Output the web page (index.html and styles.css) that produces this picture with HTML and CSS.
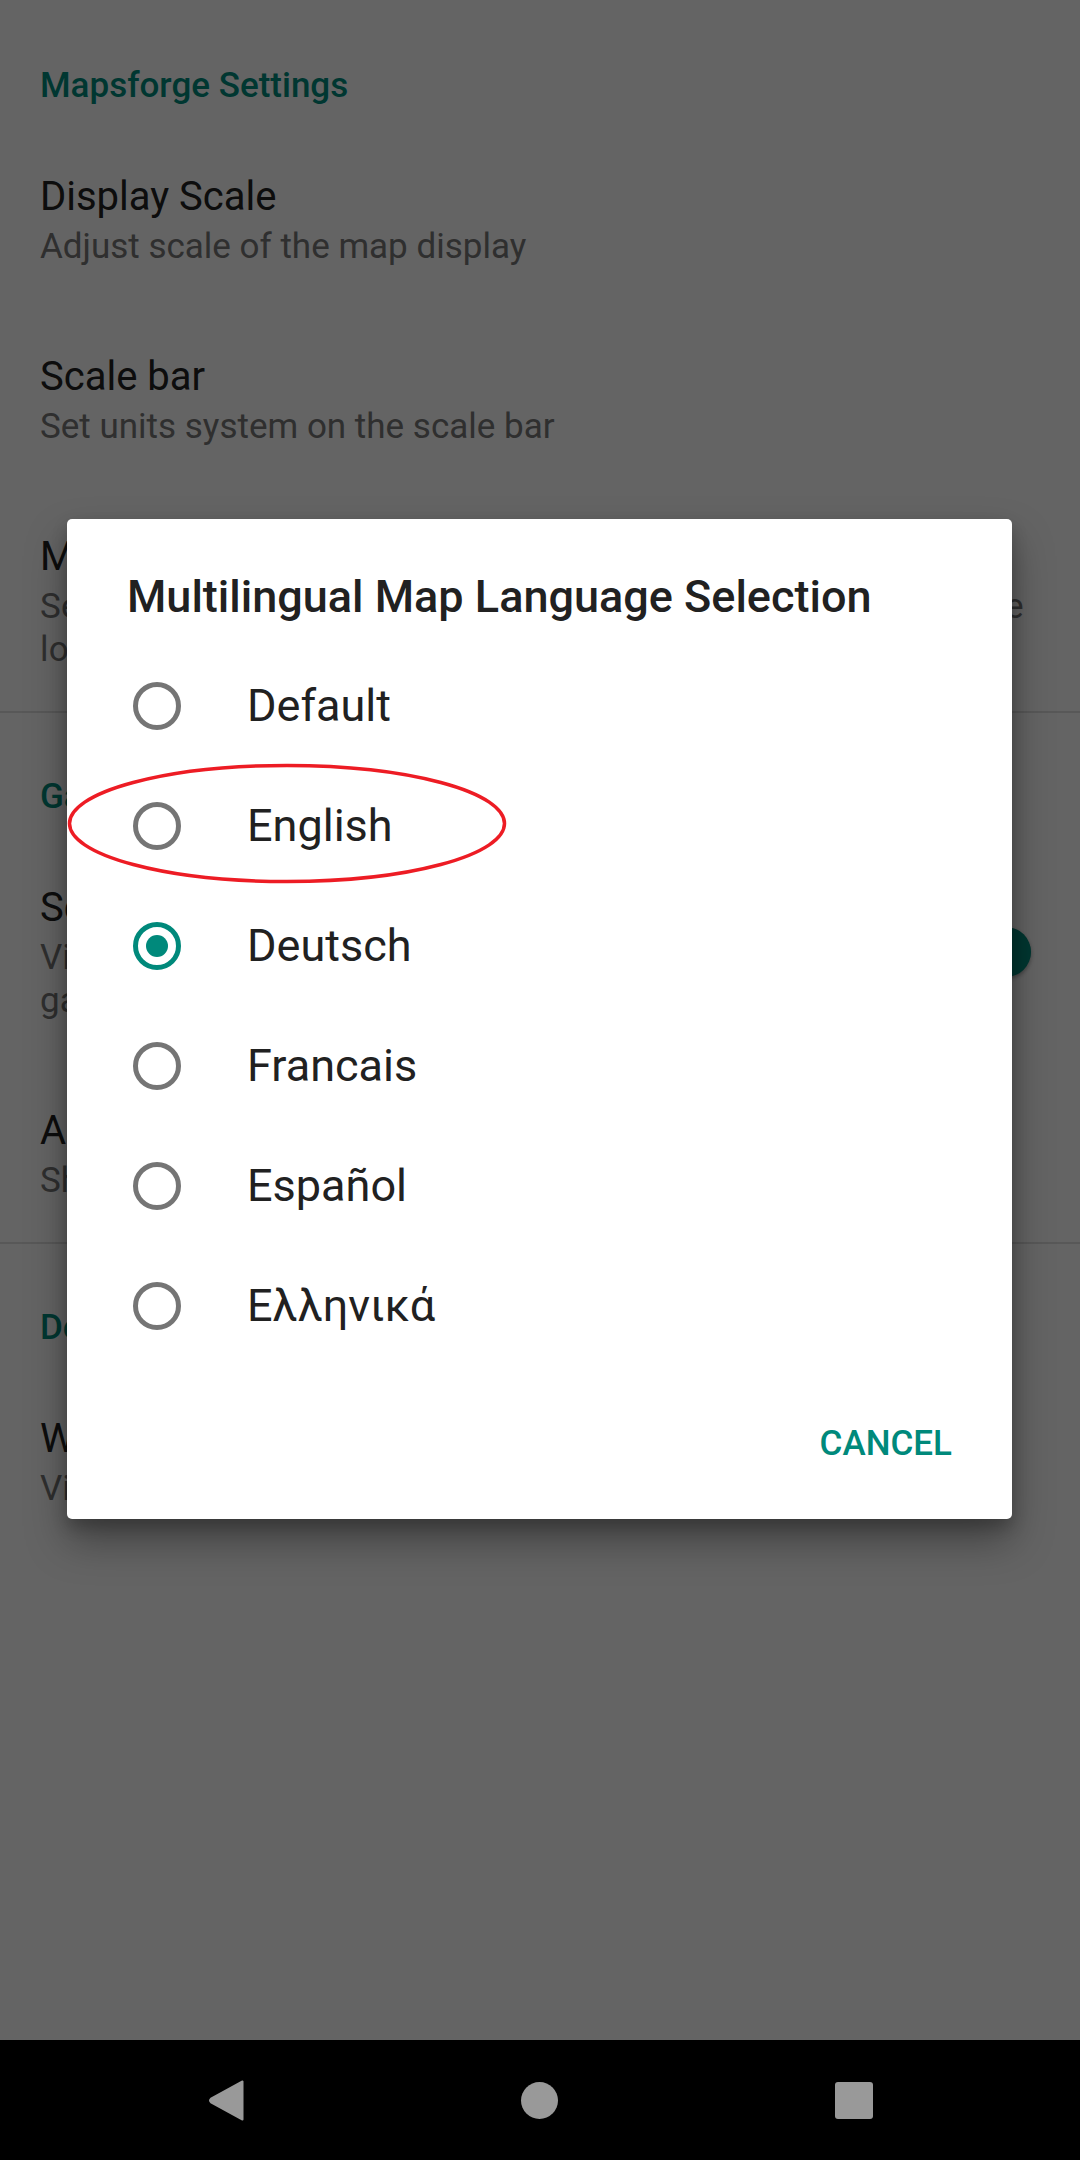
FILE: index.html
```html
<!DOCTYPE html>
<html lang="en">
<head>
<meta charset="utf-8">
<title>Mapsforge Settings</title>
<link rel="stylesheet" href="styles.css">
</head>
<body>
<div class="screen">
  <main class="prefs">
    <section class="group">
      <h2 class="cat">Mapsforge Settings</h2>
      <div class="item">
        <div class="title">Display Scale</div>
        <div class="summary">Adjust scale of the map display</div>
      </div>
      <div class="item">
        <div class="title">Scale bar</div>
        <div class="summary">Set units system on the scale bar</div>
      </div>
      <div class="item">
        <div class="title">Multilingual Map</div>
        <div class="summary wide">Select the map's language for multilingual maps, otherwise the<br>local language is used</div>
      </div>
    </section>
    <section class="group divided">
      <h2 class="cat">Gallery</h2>
      <div class="item switch-item">
        <div class="texts">
          <div class="title">Scene view</div>
          <div class="summary">View the sample maps one after another in the<br>gallery</div>
        </div>
        <div class="switch"><span class="track"></span><span class="thumb"></span></div>
      </div>
      <div class="item">
        <div class="title">Animation</div>
        <div class="summary">Show animated map movements</div>
      </div>
    </section>
    <section class="group divided">
      <h2 class="cat">Debug</h2>
      <div class="item">
        <div class="title">Wireframe</div>
        <div class="summary">View tile boundaries</div>
      </div>
    </section>
    <div class="scrim"></div>
  </main>
  <nav class="navbar">
    <svg class="nav-back" width="36" height="41" viewBox="0 0 36 41"><path d="M34.5 1.5 L34.5 39.5 L3 22.3 Q1 20.5 3 18.7 Z" fill="#999" stroke="#999" stroke-width="2" stroke-linejoin="round"/></svg>
    <span class="nav-home"></span>
    <span class="nav-recent"></span>
  </nav>
</div>

<div class="dialog">
  <h1 class="dlg-title">Multilingual Map Language Selection</h1>
  <ul class="choices">
    <li class="choice"><span class="radio"></span><span class="label">Default</span></li>
    <li class="choice"><span class="radio"></span><span class="label">English</span></li>
    <li class="choice"><span class="radio checked"><span class="dot"></span></span><span class="label">Deutsch</span></li>
    <li class="choice"><span class="radio"></span><span class="label">Francais</span></li>
    <li class="choice"><span class="radio"></span><span class="label">Español</span></li>
    <li class="choice"><span class="radio"></span><span class="label">Ελληνικά</span></li>
  </ul>
  <div class="actions"><span class="btn">CANCEL</span></div>
</div>

<svg class="annotation" width="440" height="121" viewBox="0 0 440 121"><ellipse cx="220" cy="60.5" rx="217.5" ry="58" fill="none" stroke="#ED1C24" stroke-width="3.5"/></svg>
</body>
</html>
```

FILE: styles.css
```css
* { box-sizing: border-box; }
html, body { margin: 0; padding: 0; }
body {
  width: 1080px;
  height: 2160px;
  overflow: hidden;
  position: relative;
  font-family: Roboto, "Noto Sans", "Liberation Sans", sans-serif;
  background: #000;
}
.screen {
  display: flex;
  flex-direction: column;
  height: 2160px;
}
.prefs {
  flex: 1;
  position: relative;
  background: #fafafa;
  padding-top: 2px;
}
.group.divided { border-top: 2px solid #dcdcdc; }
.cat {
  margin: 0;
  padding: 63px 40px 22px 40px;
  font-size: 35px;
  line-height: 41px;
  font-weight: 500;
  color: #00897b;
}
.item {
  padding: 42px 41px 40px 40px;
}
.title {
  font-size: 40px;
  line-height: 53px;
  color: #212121;
  white-space: nowrap;
}
.summary {
  margin-top: 2px;
  font-size: 35px;
  line-height: 43px;
  color: #757575;
  white-space: nowrap;
}
.summary.wide { letter-spacing: 0.2px; }
.switch-item {
  display: flex;
  align-items: center;
  padding-right: 49px;
}
.texts { flex: 1; }
.switch {
  display: flex;
  align-items: center;
  width: 85px;
  height: 50px;
  position: relative;
}
.track {
  width: 85px;
  height: 35px;
  border-radius: 18px;
  background: rgba(0, 137, 123, 0.5);
}
.thumb {
  position: absolute;
  right: 0;
  top: 0;
  width: 50px;
  height: 50px;
  border-radius: 50%;
  background: #00897b;
  box-shadow: 0 2px 4px rgba(0,0,0,.35);
}
.scrim {
  position: absolute;
  inset: 0;
  background: rgba(0, 0, 0, 0.6);
}
.navbar {
  height: 120px;
  background: #000;
  display: flex;
  align-items: center;
  justify-content: center;
  gap: 277px;
}
.nav-back { display: block; }
.nav-home {
  width: 37px;
  height: 37px;
  border-radius: 50%;
  background: #999;
}
.nav-recent {
  width: 38px;
  height: 37px;
  border-radius: 3px;
  background: #999;
}
.dialog {
  position: absolute;
  left: 67px;
  top: 519px;
  width: 945px;
  background: #fff;
  border-radius: 5px;
  box-shadow: 0 22px 40px rgba(0,0,0,.35), 0 8px 16px rgba(0,0,0,.2);
}
.dlg-title {
  margin: 0;
  padding: 52px 60px 0 60px;
  font-size: 45px;
  line-height: 52px;
  font-weight: 500;
  color: #212121;
  white-space: nowrap;
}
.choices {
  list-style: none;
  margin: 23px 0 0 0;
  padding: 0;
}
.choice {
  height: 120px;
  display: flex;
  align-items: center;
  padding-left: 66px;
}
.radio {
  width: 48px;
  height: 48px;
  border: 5px solid #757575;
  border-radius: 50%;
  display: flex;
  align-items: center;
  justify-content: center;
  flex: none;
}
.radio.checked { border-color: #00897b; }
.dot {
  width: 22px;
  height: 22px;
  border-radius: 50%;
  background: #00897b;
}
.label {
  margin-left: 66px;
  font-size: 45px;
  line-height: 52px;
  color: #212121;
}
.actions {
  padding: 57px 60px 55px 60px;
  display: flex;
  justify-content: flex-end;
}
.btn {
  font-size: 35px;
  line-height: 41px;
  font-weight: 500;
  color: #00897b;
}
.annotation {
  position: absolute;
  left: 67px;
  top: 763px;
}
```
